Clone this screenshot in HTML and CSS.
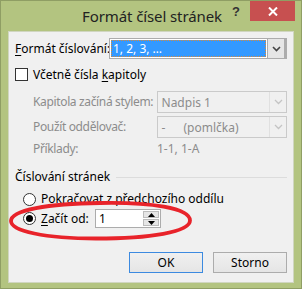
FILE: index.html
```html
<!DOCTYPE html>
<html lang="cs">
<head>
<meta charset="utf-8">
<title>Formát čísel stránek</title>
<link rel="stylesheet" href="styles.css">
</head>
<body>
<div class="window">
  <div class="titlebar">
    <div class="title">Formát čísel stránek</div>
    <div class="help">?</div>
    <div class="close">
      <svg width="10" height="9" viewBox="0 0 10 9"><path d="M1 0.5 L9 8.5 M9 0.5 L1 8.5" stroke="#fff" stroke-width="2"/></svg>
    </div>
  </div>
  <div class="client">
    <div class="row r-format">
      <span class="label lbl-format"><u>F</u>ormát číslování:</span>
      <div class="combo focus">
        <div class="combo-val"><span class="sel">1, 2, 3, …</span></div>
        <div class="combo-btn">
          <svg width="9" height="6" viewBox="0 0 9 6"><path d="M1 1 L4.5 4.5 L8 1" fill="none" stroke="#444" stroke-width="1.6"/></svg>
        </div>
      </div>
    </div>

    <div class="row r-check">
      <span class="checkbox"></span>
      <span class="label">Včetně čísla <u>k</u>apitoly</span>
    </div>

    <div class="row r-sub r-kap">
      <span class="label dis lbl-sub">Kapitola začíná stylem:</span>
      <div class="combo disabled">
        <div class="combo-val">Nadpis 1</div>
        <div class="combo-btn">
          <svg width="9" height="6" viewBox="0 0 9 6"><path d="M1 1 L4.5 4.5 L8 1" fill="none" stroke="#c4c4c4" stroke-width="1.3"/></svg>
        </div>
      </div>
    </div>

    <div class="row r-sub r-odd">
      <span class="label dis lbl-sub">Použít oddělovač:</span>
      <div class="combo disabled">
        <div class="combo-val"><span class="dash">-</span>(pomlčka)</div>
        <div class="combo-btn">
          <svg width="9" height="6" viewBox="0 0 9 6"><path d="M1 1 L4.5 4.5 L8 1" fill="none" stroke="#c4c4c4" stroke-width="1.3"/></svg>
        </div>
      </div>
    </div>

    <div class="row r-sub r-ex">
      <span class="label dis lbl-sub">Příklady:</span>
      <span class="label dis">1-1, 1-A</span>
    </div>

    <div class="row r-group">
      <span class="label">Číslování stránek</span>
      <span class="group-line"></span>
    </div>

    <div class="row r-radio r-radio1">
      <span class="radio"></span>
      <span class="label">Pok<u>r</u>ačovat z předchozího oddílu</span>
    </div>

    <div class="row r-radio r-radio2">
      <span class="radio checked"></span>
      <span class="label lbl-start"><u>Z</u>ačít od:</span>
      <div class="spin">
        <div class="spin-val">1</div>
        <div class="spin-btns">
          <div class="spin-btn">
            <svg width="7" height="4" viewBox="0 0 7 4"><path d="M0 4 L3.5 0 L7 4 Z" fill="#000"/></svg>
          </div>
          <div class="spin-btn">
            <svg width="7" height="4" viewBox="0 0 7 4"><path d="M0 0 L3.5 4 L7 0 Z" fill="#000"/></svg>
          </div>
        </div>
      </div>
    </div>

    <div class="row r-buttons">
      <button class="btn default">OK</button>
      <button class="btn">Storno</button>
    </div>
  </div>

  <svg class="annotation" width="302" height="289" viewBox="0 0 302 289">
    <path d="M100 203 C 150 202, 190 208, 190 220.5 C 190 232, 150 238.5, 96 238.5 C 45 238.5, 11 231, 11 221 C 11 210, 48 203.5, 100 203 Z" fill="none" stroke="#e8232a" stroke-width="3.8"/>
  </svg>
</div>
</body>
</html>
```

FILE: styles.css
```css
* { box-sizing: border-box; }
html, body { margin: 0; padding: 0; }
body {
  width: 302px;
  height: 289px;
  overflow: hidden;
  font-family: "Noto Sans", "Open Sans", sans-serif;
  font-size: 12px;
  color: #000;
}
.window {
  position: relative;
  width: 302px;
  height: 289px;
  background: #b3c480;
  border: 1px solid #8f9e64;
  display: flex;
  flex-direction: column;
}
.titlebar {
  position: relative;
  height: 30px;
  display: flex;
  justify-content: center;
}
.title {
  margin-top: 5px;
  margin-left: 2px;
  font-size: 15px;
  color: #222;
  letter-spacing: -0.1px;
  line-height: 20px;
}
.help {
  position: absolute;
  left: 231px;
  top: 3px;
  font-family: "Liberation Sans", sans-serif;
  font-weight: bold;
  font-size: 13px;
  color: #333;
}
.close {
  position: absolute;
  left: 249px;
  top: 0;
  width: 45px;
  height: 20px;
  background: #c75050;
  display: flex;
  align-items: center;
  justify-content: center;
}
.client {
  flex: 1;
  margin: 0 7px 5px 7px;
  background: #f0f0f0;
  border: 1px solid #d0d6c0;
  padding: 6px 6px 0 6px;
  display: flex;
  flex-direction: column;
}
.row {
  display: flex;
  align-items: center;
}
.label { white-space: nowrap; line-height: 16px; }
.label u { text-decoration: underline; text-underline-offset: 2px; }
.dis { color: #8c8c8c; }

.r-format { height: 21px; }
.lbl-format { width: 94px; }

.combo {
  display: flex;
  border: 1px solid #acacac;
  background: #fff;
  height: 100%;
}
.combo.focus { width: 179px; }
.combo-val {
  flex: 1;
  display: flex;
  align-items: center;
  padding: 1px;
}
.combo.focus .combo-val .sel {
  flex: 1;
  height: 100%;
  background: #3399ff;
  color: #fff;
  outline: 1px dotted #d88a3a;
  outline-offset: -1px;
  padding-left: 2px;
  display: flex;
  align-items: center;
}
.combo-btn {
  width: 17px;
  display: flex;
  align-items: center;
  justify-content: center;
  background: #e6e6e6;
  border-left: 1px solid #acacac;
}
.combo.focus { border-right-width: 3px; }

.r-check { height: 21px; margin-top: 5px; }
.checkbox {
  width: 13px;
  height: 13px;
  border: 1px solid #333;
  background: #fff;
  margin-right: 5px;
}

.r-sub { padding-left: 18px; }
.lbl-sub { width: 124px; letter-spacing: -0.35px; }
.r-kap { height: 22px; margin-top: 6px; }
.r-odd { height: 22px; margin-top: 3px; }
.combo.disabled {
  width: 131px;
  border-color: #cacaca;
  background: #f0f0f0;
  color: #8c8c8c;
}
.combo.disabled .combo-val { padding-left: 4px; }
.combo.disabled .combo-btn { background: #f0f0f0; border-left: 1px solid #e0e0e0; }
.dash { width: 22px; display: inline-block; }
.r-ex { height: 16px; margin-top: 3px; }

.r-group { height: 16px; margin-top: 12px; }
.group-line {
  flex: 1;
  height: 1px;
  background: #dcdcdc;
  margin-left: 6px;
  margin-right: 0;
}

.r-radio { padding-left: 8px; }
.r-radio1 { height: 18px; margin-top: 5px; }
.r-radio2 { height: 19px; margin-top: 1px; }
.radio {
  width: 13px;
  height: 13px;
  border: 1px solid #333;
  border-radius: 50%;
  background: #fff;
  margin-right: 5px;
  display: flex;
  align-items: center;
  justify-content: center;
}
.radio.checked::after {
  content: "";
  width: 7px;
  height: 7px;
  border-radius: 50%;
  background: #000;
}
.lbl-start { width: 54px; }
.spin {
  width: 66px;
  height: 19px;
  display: flex;
  border: 1px solid #acacac;
  background: #fff;
}
.spin-val {
  flex: 1;
  padding-left: 3px;
  line-height: 17px;
}
.spin-btns {
  width: 16px;
  display: flex;
  flex-direction: column;
  margin: 1px 1px 1px 0;
  gap: 1px;
  background: #fff;
}
.spin-btn {
  flex: 1;
  background: #e6e6e6;
  border: 1px solid #bcbcbc;
  display: flex;
  align-items: center;
  justify-content: center;
}

.r-buttons {
  margin-top: 24px;
  justify-content: flex-end;
  gap: 10px;
}
.btn {
  width: 74px;
  height: 21px;
  padding: 0;
  font-family: inherit;
  font-size: 12px;
  color: #000;
  border: 1px solid #acacac;
  background: linear-gradient(#f0f0f0, #e5e5e5);
  border-radius: 0;
}
.btn.default { border-color: #3c8ae0; }

.annotation {
  position: absolute;
  left: -1px;
  top: -1px;
  pointer-events: none;
}
```
